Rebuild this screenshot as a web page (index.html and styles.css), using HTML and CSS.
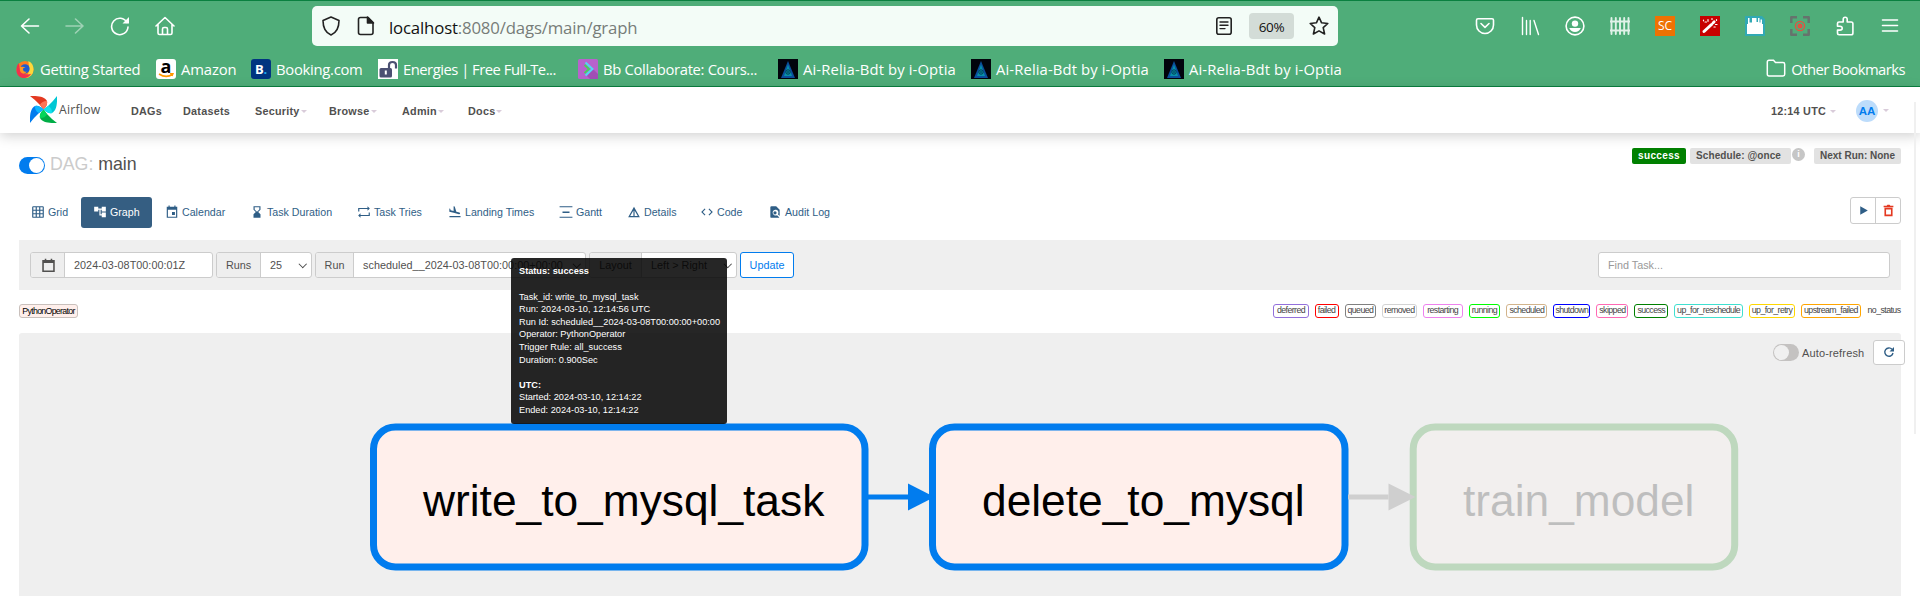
FILE: index.html
```html
<!DOCTYPE html>
<html lang="en">
<head>
<meta charset="utf-8">
<title>main - Graph - Airflow</title>
<link rel="stylesheet" href="styles.css">
</head>
<body>
<svg width="0" height="0" class="defs">
  <symbol id="ai" viewBox="0 0 20 20"><path fill="#02040c" d="M0 0h20v20H0z"/><path fill="#0a4f9c" d="M10 2 17 19H3z"/><path fill="#0791a8" d="M10 5.500 14 17H6z"/><circle cx="10" cy="13" r="2.200" fill="none" stroke="#023c52"/><circle cx="10" cy="13" r=".7" fill="#012"/></symbol>
  <symbol id="blade" viewBox="0 0 27 27"><path d="M0 0C8-.3 14.500.500 17 5q1 4-3.500 8.500L9.500 8.500Q6 4.500 0 0z"/></symbol>
  <symbol id="tip" viewBox="0 0 27 27"><path d="M10 8.500q2.500-3.800 7-3.500 1 4-3.500 8.500z"/></symbol>
</svg>
<header class="chrome">
  <div class="toolbar">
    <div class="nav-icons">
      <svg viewBox="0 0 20 20"><path d="M18.500 10H1.500M9 3 1.500 10 9 17"/></svg>
      <svg viewBox="0 0 20 20" class="dim"><path d="M1 10h17M10.500 3 18 10l-7.500 7"/></svg>
      <svg viewBox="0 0 20 20"><path d="M17 6.500A8.200 8.200 0 1 0 18 11"/><path d="M19 1v6.500h-6.500z" fill="#fff" stroke="none"/></svg>
      <svg viewBox="0 0 20 20"><path d="M1 10 10 1.500 19 10M3 8.500V17q0 1.500 1.500 1.500h11q1.500 0 1.500-1.500V8.500M7.500 18v-5q0-1.500 1.500-1.500h2q1.500 0 1.500 1.500v5"/></svg>
    </div>
    <div class="urlbar">
      <svg viewBox="0 0 20 20"><path d="m10 1 8 3.500c0 7-2 12-8 14.500-6-2.500-8-7.500-8-14.500z"/></svg>
      <svg viewBox="0 0 20 20" class="page-ic"><path d="M4.500 1.500H12L17 6.500v10q0 2-2 2H4.500q-2 0-2-2v-13q0-2 2-2z"/><path d="M11.500 1v6H17.500z" fill="#222"/></svg>
      <span class="url"><b>localhost</b>:8080/dags/main/graph</span>
      <svg viewBox="0 0 20 20" class="reader"><rect x="2.800" y="1.800" width="14.400" height="16.400" rx="2"/><path d="M6 6h8M6 9.300h8M6 12.600h5" stroke-width="1.400"/></svg>
      <span class="zoom">60%</span>
      <svg viewBox="0 0 20 20"><path d="m10 1.200 2.600 5.600 6.200.7-4.600 4.200 1.400 6.300-5.600-3.100-5.600 3.100 1.400-6.300L1.200 7.500l6.200-.7z"/></svg>
    </div>
    <div class="ext-icons">
      <svg viewBox="0 0 20 20"><path d="M3 2.800h14q1.500 0 1.500 1.500V9a8.500 8.500 0 0 1-17 0V4.300Q1.500 2.800 3 2.800zM6 7.500l4 3.800 4-3.800"/></svg>
      <svg viewBox="0 0 20 20"><path d="M2.500 1.500v17M6.500 4.500v14M10.200 4.500v14M14 4.500l4.500 14" stroke-width="1.400"/></svg>
      <svg viewBox="0 0 20 20"><circle cx="10" cy="10" r="8.900"/><circle cx="10" cy="7.600" r="3.200" fill="#fff" stroke="none"/><path d="M4.200 12h11.600Q14 16 10 16t-5.800-4z" fill="#fff" stroke="none"/></svg>
      <svg viewBox="0 0 20 20"><path stroke="#e0f2e8" stroke-width="1.900" d="M1.500 2v16M5.800 2v16M10 2v16M14.200 2v16M18.500 2v16M0 5.500h20M0 14.500h20"/></svg>
      <span class="sc">SC</span>
      <svg viewBox="0 0 20 20"><path fill="#c80000" stroke="none" d="M0 0h20v20H0z"/><path d="m4 15.500 7.500-7" stroke-width="3"/><path d="m13 7 1.200-1.200" stroke-width="2.800"/><path stroke-width="1.200" d="M8 3.500v1.800M5 6h1.500M12 2.500v1M16.500 3.500v1M15.500 8.500h1.500M14 11h1.200M3.500 4v.8"/></svg>
      <svg viewBox="0 0 20 20"><path fill="#31a9b4" stroke="none" d="M0 0h17l3 3v17H0z"/><path fill="#fff" stroke="none" d="M2 8h16v10H2zM3 2h1.500v6H3zM7 2h4.500v4H13V2h1.500v6H7zM15.500 3.500H17V9h-1.500z"/><path fill="#fff" stroke="none" d="M3 6.500h14V9H3z"/></svg>
      <svg viewBox="0 0 20 20"><path stroke="#66736d" stroke-width="2.500" stroke-linecap="butt" d="M1.300 7V1.300H7M13 1.300h5.700V7M18.700 13v5.700H13M7 18.700H1.300V13"/><circle cx="10" cy="10" r="4.600" stroke="#e25241" stroke-width="1.300"/><circle cx="10" cy="10" r="2.500" fill="#e25241" stroke="none"/></svg>
      <svg viewBox="0 0 20 20"><path d="M2.500 9V7.500Q2.500 6 4 6H8.200V3.300q0-2.100 2-2.100t2 2.100V6h4q1.700 0 1.700 1.700V17q0 1.800-1.700 1.800H4.200q-1.700 0-1.700-1.700v-3H5q2.200 0 2.200-1.900T5 10.300H2.500z"/></svg>
      <svg viewBox="0 0 20 20"><path d="M2.500 4h15M2.500 9.500h15M2.500 15h15"/></svg>
    </div>
  </div>
  <div class="bookmarks">
    <span class="bm w140 b1"><svg viewBox="0 0 20 20"><circle cx="9.500" cy="10.500" r="9" fill="#ff7b1d"/><path d="M13 1.500c4 2 5.500 5 5.500 9a9 9 0 0 1-9 9q6-4 3.500-18z" fill="#ffd83a"/><path d="M.5 11c0 10 12 11 15.500 4C8 18 4 13 3 4Q.5 6 .5 11z" fill="#f2314c"/><circle cx="9.500" cy="9.800" r="4.900" fill="#1e5bd0"/><path d="M4 8q4-1 6 .5-3 0-2.500 2.500t4 1.500q-2 3-5 2T4 8z" fill="#ff961f"/></svg>Getting Started</span>
    <span class="bm w95"><i class="fav amazon">a<svg viewBox="0 0 20 6"><path d="M3 1q7 4.500 13.500.5M14 .5h3L16 3" fill="none" stroke="#f90" stroke-width="1.500"/></svg></i>Amazon</span>
    <span class="bm w127 b1"><i class="fav booking">B<em>.</em></i>Booking.com</span>
    <span class="bm w200 b2"><svg viewBox="0 0 20 20"><path fill="#fff" d="M0 0h20v20H0z"/><rect x="1.500" y="9" width="12.500" height="9.500" rx="1.500" fill="#4b5072"/><path d="M11 9.500V6q0-3 3.500-3T18 6v3.500" fill="none" stroke="#4b5072" stroke-width="2.200"/><path d="M7.800 11.500v4" stroke="#fff" stroke-width="2"/></svg>Energies | Free Full-Te...</span>
    <span class="bm w200 b3"><svg viewBox="0 0 20 20"><rect width="20" height="20" rx="1.500" fill="#b862cc"/><path d="m9 17 6-7 5 5v5h-8z" fill="#a14fb5"/><path d="m7.500 3.500 7 6.500-7 6.500" fill="none" stroke="#53d7f4" stroke-width="2"/><path d="m6.500 6 4.500 4-4.500 4" fill="none" stroke="#42d658" stroke-width="1.800"/></svg>Bb Collaborate: Cours...</span>
    <span class="bm w193 b4"><svg><use href="#ai"/></svg>Ai-Relia-Bdt by i-Optia</span>
    <span class="bm w193 b4"><svg><use href="#ai"/></svg>Ai-Relia-Bdt by i-Optia</span>
    <span class="bm b4"><svg><use href="#ai"/></svg>Ai-Relia-Bdt by i-Optia</span>
    <span class="bm other"><svg viewBox="0 0 20 20"><path d="M3 1.300h4.500l2 2.200H17q1.700 0 1.700 1.700v10q0 1.700-1.700 1.700H3q-1.700 0-1.700-1.700V3Q1.300 1.300 3 1.300z" fill="none" stroke="#fff" stroke-width="1.500"/></svg>Other Bookmarks</span>
  </div>
</header>

<nav class="navbar">
  <svg class="logo" viewBox="0 0 27 27">
    <g><use href="#blade" width="27" height="27" fill="#e43921"/><use href="#tip" width="27" height="27" fill="#ff7557"/></g>
    <g transform="rotate(90 13.500 13.500)"><use href="#blade" width="27" height="27" fill="#00c7d4"/><use href="#tip" width="27" height="27" fill="#11e1ee"/></g>
    <g transform="rotate(180 13.500 13.500)"><use href="#blade" width="27" height="27" fill="#00ad46"/><use href="#tip" width="27" height="27" fill="#04d659"/></g>
    <g transform="rotate(270 13.500 13.500)"><use href="#blade" width="27" height="27" fill="#017cee"/><use href="#tip" width="27" height="27" fill="#0cb6ff"/></g>
  </svg>
  <span class="brand">Airflow</span>
  <a class="n1">DAGs</a><a class="n2">Datasets</a><a class="n3 caret">Security</a><a class="n4 caret">Browse</a><a class="n5 caret">Admin</a><a class="n6 caret">Docs</a>
  <a class="clock caret">12:14 UTC</a>
  <a class="user caret"><span>AA</span></a>
</nav>

<main>
  <div class="title">
    <span class="switch on"></span><h3><span>DAG:</span> main</h3>
    <div class="labels"><span class="lab ok">success</span><span class="lab sched">Schedule: @once</span><span class="info">i</span><span class="lab next">Next Run: None</span></div>
  </div>
  <div class="tabs">
    <a class="t1"><svg viewBox="0 0 24 24"><path d="M20 2H4a2 2 0 0 0-2 2v16a2 2 0 0 0 2 2h16a2 2 0 0 0 2-2V4a2 2 0 0 0-2-2zM8 20H4v-4h4zm0-6H4v-4h4zm0-6H4V4h4zm6 12h-4v-4h4zm0-6h-4v-4h4zm0-6h-4V4h4zm6 12h-4v-4h4zm0-6h-4v-4h4zm0-6h-4V4h4z"/></svg>Grid</a>
    <a class="t2 active"><svg viewBox="0 0 24 24"><path d="M22 11V3h-7v3H9V3H2v8h7V8h2v10h4v3h7v-8h-7v3h-2V8h2v3z"/></svg>Graph</a>
    <a class="t3"><svg viewBox="0 0 24 24"><path d="M17 12h-5v5h5zM16 1v2H8V1H6v2H3v19h18V3h-3V1zm3 19H5V8h14z"/></svg>Calendar</a>
    <a class="t4"><svg viewBox="0 0 24 24"><path d="M6 2v6l4 4-4 4v6h12v-6l-4-4 4-4V2zm2 2h8v3.500l-4 4-4-4z" fill-rule="evenodd"/></svg>Task Duration</a>
    <a class="t5"><svg viewBox="0 0 24 24"><path d="M4 7h14v3l4-4-4-4v3H2v6h2zM20 17H6v-3l-4 4 4 4v-3h16v-6h-2z"/></svg>Task Tries</a>
    <a class="t6"><svg viewBox="0 0 24 24"><path d="M2.500 19h19v2h-19zm7.200-5.700 9.100 2.500a1.500 1.500 0 0 0 .8-2.900l-5.300-1.400-2.800-9-1.900-.5v8.300l-5-1.400-.9-2.300-1.400-.4v5.200z"/></svg>Landing Times</a>
    <a class="t7"><svg viewBox="0 0 24 24"><path d="M1 2h22v2H1zM1 20h22v2H1zM6 11h12v2.500H6z"/></svg>Gantt</a>
    <a class="t8"><svg viewBox="0 0 24 24"><path d="M12 3 2 21h20zm-1 6.500V19H5.500zm2 0 5.500 9.500H13z" fill-rule="evenodd"/></svg>Details</a>
    <a class="t9"><svg viewBox="0 0 24 24"><path d="M9.400 16.600 4.800 12l4.600-4.600L8 6l-6 6 6 6zm5.200 0 4.600-4.600-4.600-4.600L16 6l6 6-6 6z"/></svg>Code</a>
    <a class="t10"><svg viewBox="0 0 24 24"><path d="M14 2H6a2 2 0 0 0-2 2v16a2 2 0 0 0 2 2h12a2 2 0 0 0 1.500-.6l-4-4A5 5 0 1 1 17 16l3 3V8zM12 10.500a2.800 2.800 0 1 0 0 5.600 2.800 2.800 0 0 0 0-5.600z"/></svg>Audit Log</a>
    <div class="actions"><span><svg viewBox="0 0 24 24" fill="#2f5e86"><path d="M6 4v16l14-8z"/></svg></span><span><svg viewBox="0 0 24 24" fill="#e43921"><path d="M15.500 3 14 1.500h-4L8.500 3H3v3h18V3zM4.500 7v15.500h15V7zm3 3h9v9.500h-9z" fill-rule="evenodd"/></svg></span></div>
  </div>
  <div class="filters">
    <div class="grp g1"><span class="addon"><svg viewBox="0 0 24 24" fill="#51504f"><path d="M20 3h-2V1h-2.500v2h-7V1H6v2H2v19.500h20V3zm-.500 17h-15V8h15z"/></svg></span><span class="field">2024-03-08T00:00:01Z</span></div>
    <div class="grp g2"><span class="addon">Runs</span><span class="field sel">25</span></div>
    <div class="grp g3"><span class="addon">Run</span><span class="field sel">scheduled__2024-03-08T00:00:00+00:00</span></div>
    <div class="grp g4"><span class="addon">Layout</span><span class="field sel">Left &gt; Right</span></div>
    <button class="update">Update</button>
    <span class="find">Find Task...</span>
  </div>
  <div class="legend">
    <span class="python">PythonOperator</span>
    <div class="states"><span class="s1">deferred</span><span class="s2">failed</span><span class="s3">queued</span><span class="s4">removed</span><span class="s5">restarting</span><span class="s6">running</span><span class="s7">scheduled</span><span class="s8">shutdown</span><span class="s9">skipped</span><span class="s10">success</span><span class="s11">up_for_reschedule</span><span class="s12">up_for_retry</span><span class="s13">upstream_failed</span><span class="s14">no_status</span></div>
  </div>
  <div class="graph">
    <svg class="dag" viewBox="19 333 1882 263">
      <g class="node"><rect x="373.500" y="427" width="491.500" height="140" rx="22"/><text x="423" y="516">write_to_mysql_task</text></g>
      <g class="node"><rect x="932.500" y="427" width="412.500" height="140" rx="22"/><text x="982" y="516">delete_to_mysql</text></g>
      <g class="edge"><path d="M868 497h42"/><path class="head" d="m908 483.500 26.500 13.500-26.500 13.500z"/></g>
      <g class="node faded"><rect x="1413.200" y="427" width="321.500" height="140" rx="22"/><text x="1463" y="516">train_model</text></g>
      <g class="edge faded"><path d="M1348 497h40.500"/><path class="head" d="m1388.500 483.500 27 13.500-27 13.500z"/></g>
    </svg>
    <div class="refresh"><span class="switch off"></span><label>Auto-refresh</label><button><svg viewBox="0 0 24 24" fill="none" stroke="#2f5e86" stroke-width="2.800"><path d="M18 6.500a8.300 8.300 0 1 0 2 7.500"/><path d="M22 2v9h-9z" fill="#2f5e86" stroke="none"/></svg></button></div>
  </div>
</main>
<div class="tooltip"><p class="status"><b>Status: success</b></p><p>Task_id: write_to_mysql_task<br>Run: 2024-03-10, 12:14:56 UTC<br>Run Id: scheduled__2024-03-08T00:00:00+00:00<br>Operator: PythonOperator<br>Trigger Rule: all_success<br>Duration: 0.900Sec</p><p><b>UTC:</b><br>Started: 2024-03-10, 12:14:22<br>Ended: 2024-03-10, 12:14:22</p></div>
<div class="scroll"></div>
</body>
</html>
```
FILE: styles.css
```css
* { box-sizing: border-box; }
body { margin: 0; width: 1920px; height: 596px; overflow: hidden; background: #fff; color: #51504f; font: 10.8px "Liberation Sans", Arial, sans-serif; position: relative; }
.defs { position: absolute; }
svg { display: block; flex: none; }

/* browser chrome */
.chrome { height: 87px; background: #4fad79; border-top: 1px solid #0a8040; border-bottom: 1px solid #0a8040; color: #fff; font-family: "Open Sans", "Noto Sans", sans-serif; }
.toolbar { display: flex; height: 50px; padding-top: 5px; }
.toolbar svg { width: 20px; height: 20px; fill: none; stroke: #fff; stroke-width: 1.6; stroke-linecap: round; stroke-linejoin: round; }
.nav-icons { display: flex; gap: 25px; padding: 10px 0 0 20px; width: 312px; }
.nav-icons .dim { opacity: .45; }
.urlbar { width: 1026px; height: 40px; border-radius: 5px; background: #f3fcf7; display: flex; align-items: center; padding: 0 9px 0 9px; }
.toolbar .urlbar svg { stroke: #222; }
.urlbar .page-ic { margin-left: 15px; }
.url { margin-left: 13px; padding-top: 2px; width: 823px; color: #777c79; font-size: 16.800px; letter-spacing: -.17px; }
.url b { font-weight: 400; color: #111; }
.reader { margin-left: 2px; }
.zoom { width: 45px; height: 26px; margin: 0 15px; background: #d3dcd7; border-radius: 4px; color: #111; font-size: 13.500px; line-height: 28px; text-align: center; letter-spacing: -.3px; }
.ext-icons { display: flex; gap: 25px; padding: 10px 0 0 137px; }
.sc { width: 20px; height: 20px; background: #ee7203; font-size: 12px; line-height: 20px; text-align: center; }
.bookmarks { display: flex; padding: 8px 15px 0 16px; }
.bm { display: flex; align-items: center; gap: 5px; height: 20px; font-size: 14.800px; white-space: nowrap; letter-spacing: -.1px; }
.bm svg { width: 20px; height: 20px; }
.b1 { letter-spacing: -.28px; }
.bm.b1 svg { width: 19px; }
.b2 { letter-spacing: -.5px; }
.b3 { letter-spacing: -.33px; }
.b4 { letter-spacing: .12px; }
.w140 { width: 140px; } .w95 { width: 95px; } .w127 { width: 127px; } .w200 { width: 200px; } .w193 { width: 193px; }
.other { margin-left: auto; letter-spacing: -.55px; }
.fav { width: 20px; height: 20px; flex: none; border-radius: 3px; font: bold 18px/14px "Open Sans", sans-serif; text-align: center; }
.amazon { background: #fff; color: #000; }
.bm .amazon svg { height: 6px; }
.booking { background: #003580; font-size: 13px; line-height: 20px; }
.booking em { color: #1fa9ee; font-style: normal; }

/* airflow navigation */
.navbar { height: 46px; display: flex; align-items: center; padding: 1px 31px 0 30px; box-shadow: 0 3px 12px rgba(0,0,0,.18); position: relative; font-weight: bold; letter-spacing: .25px; }
.navbar a { white-space: nowrap; }
.logo { width: 27px; height: 27px; margin-top: -3px; overflow: visible; }
.brand { width: 72px; margin: -2px 0 0 2px; font: 12.200px "Open Sans", sans-serif; }
.n1 { width: 52px; } .n2 { width: 72px; } .n3 { width: 74px; } .n4 { width: 73px; } .n5 { width: 66px; }
.caret::after { content: ""; display: inline-block; width: 0; height: 0; margin-left: 1px; vertical-align: 2px; border: 3px solid transparent; border-top-color: #d9ccda; border-bottom: 0; }
.clock { margin-left: auto; width: 85px; }
.clock::after { margin-left: 4px; }
.user { display: flex; align-items: center; gap: 4px; }
.user span { width: 22px; height: 22px; border-radius: 50%; background: #bcdcfb; color: #017cee; line-height: 22px; text-align: center; font-size: 11.500px; letter-spacing: 0; }

main { padding: 0 19px; }
.title { display: flex; height: 64px; padding-top: 15px; }
.switch { width: 26px; height: 17px; border-radius: 9px; margin-top: 9px; padding: 1px; background: #017cee; flex: none; }
.switch::before { content: ""; display: block; width: 15px; height: 15px; border-radius: 50%; background: #fff; margin-left: 9px; }
h3 { margin: 6px 0 0 5px; font-size: 17.800px; font-weight: 400; line-height: 20px; letter-spacing: -.05px; }
h3 span { color: #cbcbcb; }
.labels { margin-left: auto; display: flex; font-weight: bold; font-size: 10px; }
.lab { height: 16px; line-height: 16px; background: #e2e2e2; border-radius: 2px; text-align: center; }
.ok { width: 54px; background: #008000; color: #fff; letter-spacing: .35px; margin-right: 4px; }
.sched { width: 101px; padding-right: 4px; letter-spacing: .08px; }
.info { width: 13px; height: 13px; border-radius: 50%; margin: 0 9px 0 1px; background: #c6c6c6; color: #fff; font-size: 9px; line-height: 13px; text-align: center; }
.next { width: 87px; }

.tabs { display: flex; height: 43px; }
.tabs a { display: flex; align-items: center; gap: 3px; height: 31px; padding: 0 0 1px 12px; border-radius: 3px; color: #2f5e86; fill: #2f5e86; font-size: 10.650px; white-space: nowrap; }
.tabs a svg { width: 14px; height: 14px; }
.tabs .active { background: #355e82; color: #fff; fill: #fff; }
.t1 { width: 62px; } .t2 { width: 71px; margin-right: 1px; } .t3 { width: 85px; } .t4 { width: 107px; } .t5 { width: 91px; } .t6 { width: 111px; } .t7 { width: 68px; } .t8 { width: 73px; } .t9 { width: 68px; }
.actions { margin-left: auto; display: flex; width: 51px; height: 27px; border: 1px solid #ccc; border-radius: 3px; }
.actions span { flex: 1; display: flex; align-items: center; justify-content: center; }
.actions span + span { border-left: 1px solid #ccc; }
.actions svg { width: 13px; height: 13px; }

.filters { height: 50px; background: #efefef; display: flex; gap: 3px; padding: 12px 11px; }
.grp { display: flex; height: 26px; background: #fff; border: 1px solid #ccc; border-radius: 3px; line-height: 25px; white-space: nowrap; }
.addon { background: #eee; border-right: 1px solid #ccc; display: flex; align-items: center; justify-content: center; border-radius: 2px 0 0 2px; }
.addon svg { width: 15px; height: 15px; margin-left: 2px; }
.field { flex: 1; padding-left: 9px; letter-spacing: .04px; }
.sel { display: flex; align-items: center; justify-content: space-between; padding-right: 6px; }
.sel::after { content: ""; width: 4.500px; height: 4.500px; border: solid #444; border-width: 0 1.200px 1.200px 0; transform: rotate(45deg); margin-top: -3px; }
.g1 { width: 183px; } .g1 .addon { width: 34px; }
.g2 { width: 96px; } .g2 .addon { width: 44px; }
.g3 { width: 271px; } .g3 .addon { width: 38px; }
.g4 { width: 148px; } .g4 .addon { width: 52px; }
.update { width: 54px; height: 26px; padding: 0; background: #fff; border: 1px solid #017cee; border-radius: 3px; color: #017cee; font: inherit; }
.find { margin-left: auto; width: 292px; height: 26px; background: #fff; border: 1px solid #ccc; border-radius: 3px; padding-left: 9px; line-height: 25px; color: #999; }

.legend { height: 43px; display: flex; justify-content: space-between; padding-top: 14px; font-size: 8.800px; line-height: 11px; color: #444; }
.legend span { height: 14px; white-space: nowrap; text-align: center; }
.python { width: 59px; border: 1px solid #c9c0bc; border-radius: 3px; background: #ffefeb; color: #000; line-height: 12px; letter-spacing: -.7px; }
.states { display: flex; gap: 6.070px; }
.states span { border: 1.500px solid #ccc; border-radius: 3px; letter-spacing: -.58px; display: flex; justify-content: center; }
.states .s1 { width: 35.100px; border-color: #9370db; }
.states .s2 { width: 23.900px; border-color: red; }
.states .s3 { width: 31.600px; border-color: gray; }
.states .s4 { width: 34.300px; border-color: lightgrey; }
.states .s5 { width: 40px; border-color: violet; }
.states .s6 { width: 31.500px; border-color: lime; }
.states .s7 { width: 41.200px; border-color: tan; }
.states .s8 { width: 36.900px; border-color: blue; }
.states .s9 { width: 31.900px; border-color: hotpink; }
.states .s10 { width: 33.700px; border-color: green; }
.states .s11 { width: 68.900px; border-color: turquoise; }
.states .s12 { width: 45.900px; border-color: gold; }
.states .s13 { width: 59.900px; border-color: orange; }
.states .s14 { width: 34px; border-color: transparent; }

.graph { height: 263px; background: #efefef; border-radius: 3px 3px 0 0; position: relative; }
.dag { width: 1882px; height: 263px; }
.node rect { fill: #ffefeb; stroke: #017cee; stroke-width: 7; }
.node text { font-size: 44.300px; fill: #000; }
.node.faded { opacity: .2; }
.node.faded rect { stroke: green; }
.edge path { fill: none; stroke: #017cee; stroke-width: 5; }
.edge .head { fill: #017cee; stroke: none; }
.edge.faded path { stroke: #cfcfcf; }
.edge.faded .head { fill: #cfcfcf; stroke: none; }
.refresh { position: absolute; top: 7px; right: -4px; display: flex; align-items: center; font-size: 11px; }
.refresh .off { margin: 0 3px 0 0; background: #c4c2c1; }
.off::before { margin-left: 0; background: #f0f0f0; }
.refresh label { width: 71px; letter-spacing: .15px; }
.refresh button { width: 32px; height: 25px; border: 1px solid #ccc; border-radius: 3px; background: #fff; display: flex; align-items: center; justify-content: center; padding: 0; }
.refresh svg { width: 12px; height: 12px; margin-top: -2px; }

/* task details shown over the hovered node */
.tooltip { position: absolute; left: 511px; top: 258px; width: 216px; height: 166px; padding: 7px 8px; background: rgba(0,0,0,.85); border-radius: 3px; color: #fff; font-size: 9.200px; line-height: 12.600px; white-space: nowrap; }
.tooltip p { margin: 0 0 12.400px; }
.tooltip .status { margin-bottom: 13px; }
.scroll { position: absolute; left: 1914px; top: 102px; width: 2px; height: 332px; background: #f0f0f0; }
```
